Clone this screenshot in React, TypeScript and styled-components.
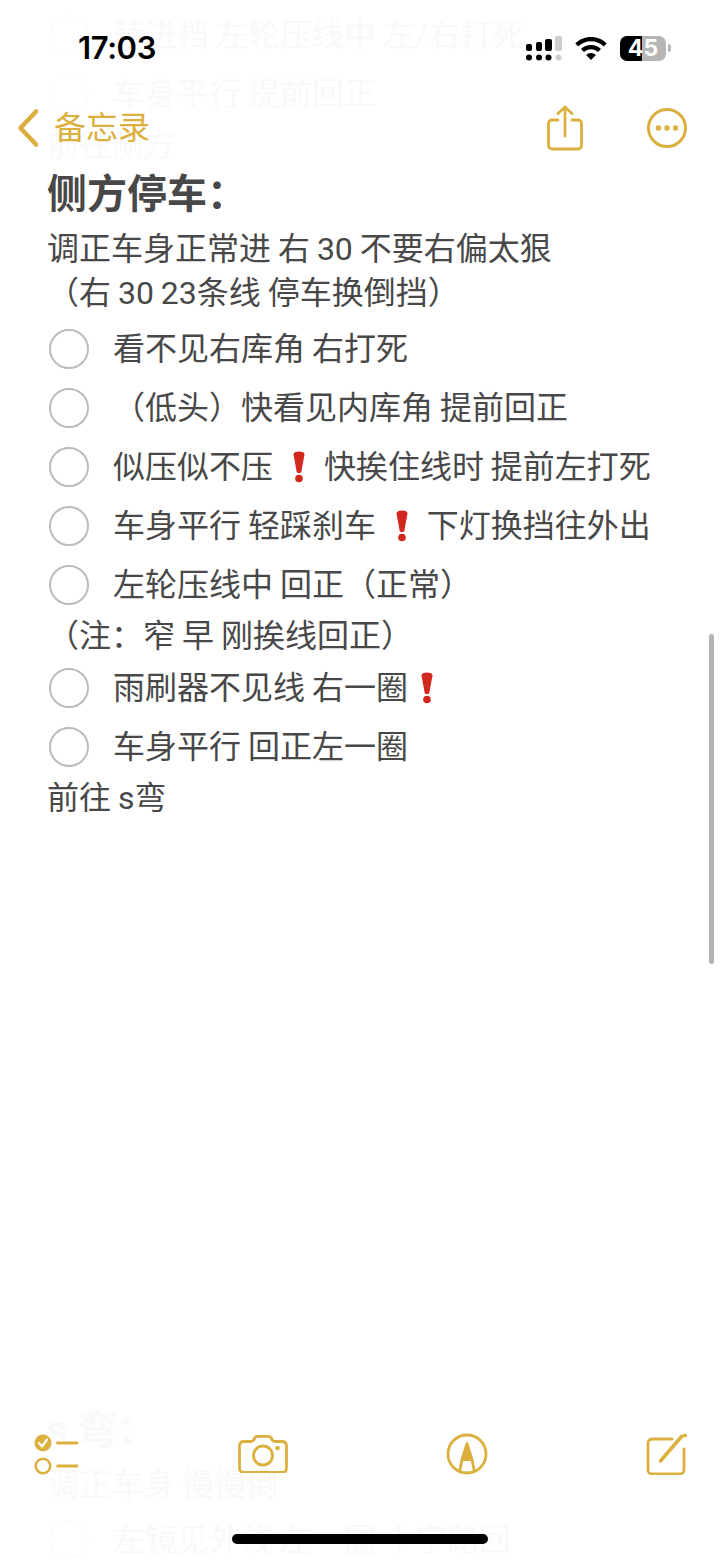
import styled, { createGlobalStyle } from "styled-components";

const GOLD = "#dcb03f";
const GHOST = "#f9f9f9";

const GlobalStyle = createGlobalStyle`
  html, body {
    margin: 0;
    padding: 0;
    background: #fff;
  }
`;

const Page = styled.div`
  position: relative;
  width: 720px;
  height: 1558px;
  overflow: hidden;
  background: #fff;
  font-family: "Roboto", "Noto Sans CJK SC", sans-serif;
  color: #444;
`;

// the note scrolls under the bars, so its last row runs past the bottom edge
const Note = styled.div`
  height: 1569px;
  box-sizing: border-box;
  padding: 5px 0 0 47px;
  display: flex;
  flex-direction: column;
`;

const Title = styled.div<{ $ghost?: boolean }>`
  height: 54px;
  line-height: 44px;
  font-size: 40px;
  font-weight: 700;
  color: ${(p) => (p.$ghost ? GHOST : "#484848")};
`;

const Line = styled.div<{ $ghost?: boolean; $height?: number }>`
  height: ${(p) => p.$height ?? 44}px;
  line-height: 44px;
  font-size: 32px;
  word-spacing: -1px;
  white-space: pre;
  color: ${(p) => (p.$ghost ? GHOST : "#484848")};
`;

const CheckRow = styled.div<{ $ghost?: boolean }>`
  height: 59px;
  display: flex;
  align-items: center;
  font-size: 32px;
  word-spacing: -1px;
  color: ${(p) => (p.$ghost ? GHOST : "#484848")};
`;

const CheckText = styled.span`
  line-height: 44px;
  white-space: pre;
`;

const Circle = styled.span<{ $ghost?: boolean }>`
  flex: none;
  box-sizing: border-box;
  width: 40px;
  height: 40px;
  margin: 0 24px 0 2px;
  border-radius: 50%;
  border: 2.5px solid ${(p) => (p.$ghost ? "#fcfcfc" : "#bcbcbc")};
`;

const Spacer = styled.div`
  flex: 1;
`;

const TopBars = styled.header`
  position: absolute;
  top: 0;
  left: 0;
  right: 0;
`;

const StatusBar = styled.div`
  height: 96px;
  box-sizing: border-box;
  padding: 30px 49px 0 78px;
  display: flex;
  align-items: flex-start;
  justify-content: space-between;
  font-family: "Inter", sans-serif;
`;

const Time = styled.div`
  font-size: 31px;
  line-height: 36px;
  font-weight: 600;
  letter-spacing: -0.4px;
  color: #000;
`;

const StatusIcons = styled.div`
  display: flex;
  align-items: center;
  height: 36px;
  gap: 13px;
`;

const Battery = styled.div<{ $level: number }>`
  width: 46px;
  height: 25px;
  border-radius: 7px;
  background: linear-gradient(
    90deg,
    #000 ${(p) => p.$level}%,
    #b6b6b6 ${(p) => p.$level}%
  );
  color: #fff;
  font-size: 23px;
  line-height: 25px;
  font-weight: 700;
  text-align: center;
`;

const BatteryCap = styled.span`
  width: 3px;
  height: 8px;
  margin-left: -11px;
  border-radius: 0 3px 3px 0;
  background: #b6b6b6;
`;

const NavBar = styled.nav`
  height: 64px;
  box-sizing: border-box;
  padding: 0 33px 0 18px;
  display: flex;
  align-items: center;
`;

const BackLabel = styled.span`
  margin-left: 16px;
  font-size: 32px;
  line-height: 44px;
  color: ${GOLD};
`;

const NavActions = styled.div`
  margin-left: auto;
  display: flex;
  align-items: center;
  gap: 64px;
`;

const Scrollbar = styled.div`
  position: absolute;
  top: 634px;
  right: 6px;
  width: 5px;
  height: 330px;
  border-radius: 3px;
  background: #b3b3b3;
`;

const BottomBars = styled.footer`
  position: absolute;
  left: 0;
  right: 0;
  bottom: 0;
  display: flex;
  flex-direction: column;
  align-items: center;
`;

const Toolbar = styled.div`
  width: 100%;
  box-sizing: border-box;
  padding: 0 32px 0 34px;
  display: flex;
  align-items: center;
  justify-content: space-between;
`;

const HomeIndicator = styled.div`
  width: 256px;
  height: 10px;
  margin: 59px 0 14px;
  border-radius: 5px;
  background: #000;
`;

const AlertMark = styled.svg`
  width: 14px;
  height: 32px;
  margin: 0 11px 0 12px;
  vertical-align: -5px;
`;

const Alert = () => (
  <AlertMark viewBox="0 0 14 32">
    <path d="M1.5 3.5C1.5 1.5 3.5 0.5 7 0.5s5.5 1 5.5 3L9.3 21c-.3 1.4-4.3 1.4-4.6 0z" fill="#d2281f" />
    <circle cx="7" cy="27.5" r="3.8" fill="#d2281f" />
  </AlertMark>
);

const SignalIcon = () => (
  <svg width="37" height="25" viewBox="0 0 37 25">
    <g fill="#000">
      <rect x="1" y="8" width="6" height="7" rx="2" />
      <rect x="11" y="6" width="6" height="9" rx="2" />
      <rect x="20" y="3" width="7" height="12" rx="2" />
      <circle cx="4" cy="21.5" r="3" />
      <circle cx="14" cy="21.5" r="3" />
      <circle cx="23.5" cy="21.5" r="3" />
    </g>
    <g fill="#cdcdcd">
      <rect x="30" y="0" width="7" height="15" rx="2" />
      <circle cx="33.5" cy="21.5" r="3" />
    </g>
  </svg>
);

const WifiIcon = () => (
  <svg width="32" height="23" viewBox="0 0 32 23">
    <path d="M16 0C9.8 0 4.3 2.4.3 6.4l3 3.1C6.5 6.3 11 4.3 16 4.3s9.500 2 12.700 5.200l3-3.100C27.700 2.400 22.200 0 16 0z" />
    <path d="M16 8c-3.900 0-7.400 1.500-10 4.100l3 3C10.800 13.300 13.300 12.200 16 12.200s5.200 1.100 7 2.900l3-3C23.400 9.500 19.900 8 16 8z" />
    <path d="M16 16c-1.900 0-3.600.7-4.900 2L16 23l4.900-5c-1.300-1.300-3-2-4.900-2z" />
  </svg>
);

const BackIcon = () => (
  <svg width="20" height="38" viewBox="0 0 20 38" fill="none" stroke={GOLD} strokeWidth="4.500" strokeLinecap="round" strokeLinejoin="round">
    <path d="M18 2.500 2.500 19 18 35.500" />
  </svg>
);

const ShareIcon = () => (
  <svg width="36" height="46" viewBox="0 0 36 46" fill="none" stroke={GOLD} strokeWidth="2.800" strokeLinecap="round" strokeLinejoin="round">
    <path d="M11 15H5a3.500 3.500 0 0 0-3.500 3.500v22A3.500 3.500 0 0 0 5 44h26a3.500 3.500 0 0 0 3.500-3.500v-22A3.500 3.500 0 0 0 31 15h-6" />
    <path d="M18 31V2M11 8.500 18 2l7 6.500" />
  </svg>
);

const MoreIcon = () => (
  <svg width="40" height="40" viewBox="0 0 40 40">
    <circle cx="20" cy="20" r="18.500" fill="none" stroke={GOLD} strokeWidth="3" />
    <g fill={GOLD}>
      <circle cx="11.500" cy="20" r="2.700" />
      <circle cx="20" cy="20" r="2.700" />
      <circle cx="28.500" cy="20" r="2.700" />
    </g>
  </svg>
);

const ChecklistIcon = () => (
  <svg width="46" height="42" viewBox="0 0 46 42" fill="none" stroke={GOLD} strokeLinecap="round">
    <circle cx="9" cy="10" r="8.500" fill={GOLD} stroke="none" />
    <path d="M5 10l3 3.500 5-7" stroke="#fff" strokeWidth="2.200" strokeLinejoin="round" />
    <circle cx="9" cy="33" r="7.300" strokeWidth="2.500" />
    <path d="M23.500 10H43M23.500 33H43" strokeWidth="2.800" />
  </svg>
);

const CameraIcon = () => (
  <svg width="50" height="38" viewBox="0 0 50 38" fill="none" stroke={GOLD} strokeWidth="2.800" strokeLinejoin="round">
    <path d="M6 6.500h7c1.500 0 2.300-.7 3-2l1-2C17.600 1.500 18.500 1.400 20 1.400h10c1.500 0 2.400.1 3 1.100l1 2c.7 1.300 1.500 2 3 2h7c2.800 0 4.500 1.700 4.500 4.500v22c0 2.800-1.700 4.500-4.500 4.500H6c-2.800 0-4.500-1.700-4.500-4.500V11c0-2.800 1.700-4.500 4.500-4.500z" />
    <circle cx="25" cy="20.500" r="9.500" />
    <circle cx="39.500" cy="13" r="2.300" fill={GOLD} stroke="none" />
  </svg>
);

const MarkupIcon = () => (
  <svg width="42" height="42" viewBox="0 0 42 42" fill="none" stroke={GOLD} strokeWidth="2.800" strokeLinejoin="round">
    <circle cx="21" cy="21" r="19" />
    <path d="M21 10.500 16 26.500h10z" fill={GOLD} />
    <path d="M16 26.500 13.500 39M26 26.500 28.500 39" />
  </svg>
);

const ComposeIcon = () => (
  <svg width="42" height="42" viewBox="0 0 42 42" fill="none" stroke={GOLD} strokeLinecap="round" strokeLinejoin="round">
    <path d="M26 6H6a4 4 0 0 0-4 4v27a4 4 0 0 0 4 4h28a4 4 0 0 0 4-4V16" strokeWidth="2.800" />
    <path d="M14.500 28 36 3" strokeWidth="3.500" />
    <circle cx="39" cy="2.500" r="2" fill={GOLD} stroke="none" />
  </svg>
);

function App() {
  return (
    <Page>
      <GlobalStyle />
      <Note>
        <CheckRow $ghost>
          <Circle $ghost />
          <CheckText>转进档 左轮压线中 左/右打死</CheckText>
        </CheckRow>
        <CheckRow $ghost>
          <Circle $ghost />
          <CheckText>车身平行 提前回正</CheckText>
        </CheckRow>
        <Line $ghost $height={50}>
          前往侧方
        </Line>
        <Title>侧方停车：</Title>
        <Line>调正车身正常进 右 30 不要右偏太狠</Line>
        <Line $height={48}>（右 30 23条线 停车换倒挡）</Line>
        <CheckRow>
          <Circle />
          <CheckText>看不见右库角 右打死</CheckText>
        </CheckRow>
        <CheckRow>
          <Circle />
          <CheckText>（低头）快看见内库角 提前回正</CheckText>
        </CheckRow>
        <CheckRow>
          <Circle />
          <CheckText>
            似压似不压 <Alert /> 快挨住线时 提前左打死
          </CheckText>
        </CheckRow>
        <CheckRow>
          <Circle />
          <CheckText>
            车身平行 轻踩刹车 <Alert /> 下灯换挡往外出
          </CheckText>
        </CheckRow>
        <CheckRow>
          <Circle />
          <CheckText>左轮压线中 回正（正常）</CheckText>
        </CheckRow>
        <Line>（注：窄 早 刚挨线回正）</Line>
        <CheckRow>
          <Circle />
          <CheckText>
            雨刷器不见线 右一圈
            <Alert />
          </CheckText>
        </CheckRow>
        <CheckRow>
          <Circle />
          <CheckText>车身平行 回正左一圈</CheckText>
        </CheckRow>
        <Line>前往 s弯</Line>
        <Spacer />
        <Title $ghost>s 弯：</Title>
        <Line $ghost $height={47}>
          调正车身 慢慢倒
        </Line>
        <CheckRow $ghost>
          <Circle $ghost />
          <CheckText>左镜见外线 左一圈 十字路回</CheckText>
        </CheckRow>
      </Note>
      <TopBars>
        <StatusBar>
          <Time>17:03</Time>
          <StatusIcons>
            <SignalIcon />
            <WifiIcon />
            <Battery $level={48}>45</Battery>
            <BatteryCap />
          </StatusIcons>
        </StatusBar>
        <NavBar>
          <BackIcon />
          <BackLabel>备忘录</BackLabel>
          <NavActions>
            <ShareIcon />
            <MoreIcon />
          </NavActions>
        </NavBar>
      </TopBars>
      <Scrollbar />
      <BottomBars>
        <Toolbar>
          <ChecklistIcon />
          <CameraIcon />
          <MarkupIcon />
          <ComposeIcon />
        </Toolbar>
        <HomeIndicator />
      </BottomBars>
    </Page>
  );
}

export default App;
